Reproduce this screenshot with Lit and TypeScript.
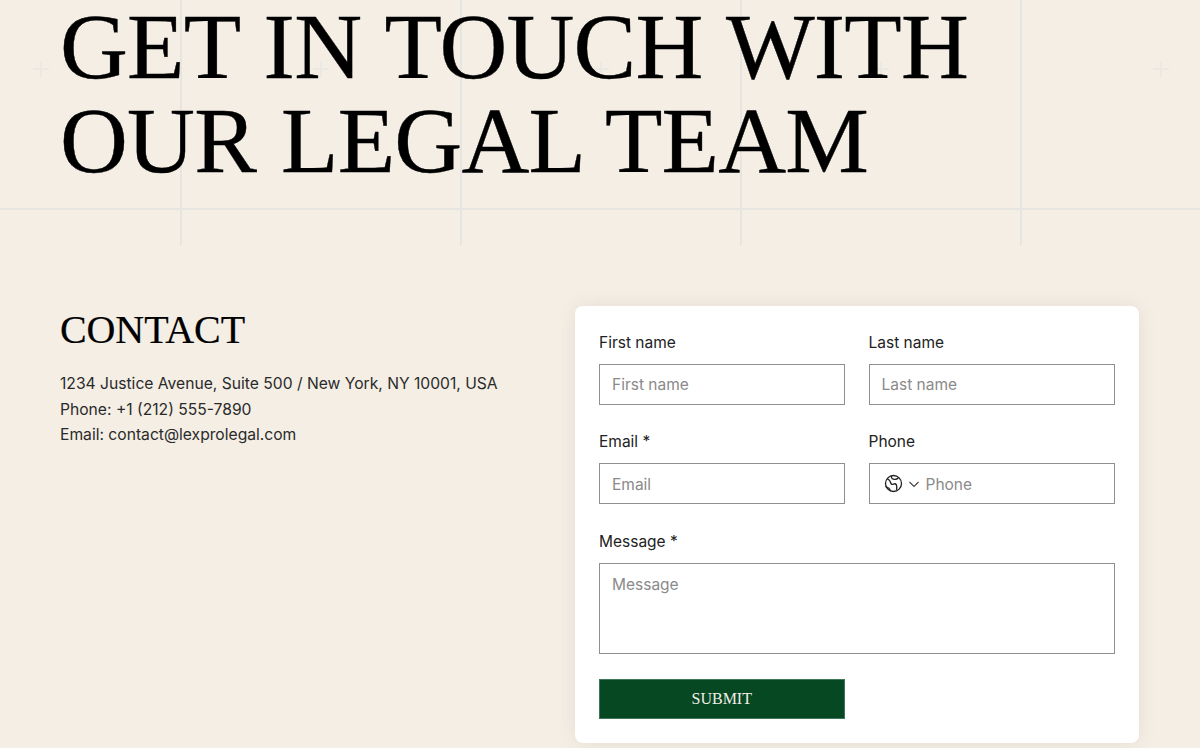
import { LitElement, html, css, svg } from "lit";
import { customElement } from "lit/decorators.js";

function svgLine(x: number) {
  return svg`<path d="M${x} 0V245" stroke="#e6e5e1" stroke-width="2" fill="none" />`;
}

function svgPlus(x: number) {
  return svg`<path d="M${x - 8} 69H${x + 8}M${x} 61V77" stroke="#e9e8e3" stroke-width="1.5" fill="none" />`;
}

@customElement("app-root")
export class AppRoot extends LitElement {
  static styles = css`
    :host {
      display: block;
      width: 1200px;
      height: 748px;
      overflow: hidden;
      background: #f4eee5;
      font-family: Inter, "Noto Sans", sans-serif;
      color: #222;
    }
    .hero {
      position: relative;
      display: flow-root;
      height: 245px;
      padding: 0 60px;
      box-sizing: border-box;
    }
    .grid {
      position: absolute;
      inset: 0;
      pointer-events: none;
    }
    h1 {
      position: relative;
      margin: -1.5px 0 0;
      font: 400 94px/94px "Liberation Serif", serif;
      letter-spacing: -0.8px;
      word-spacing: 2.3px;
      -webkit-text-stroke: 0.4px #000;
      color: #000;
    }
    .main {
      display: grid;
      grid-template-columns: 515px 564px;
      padding: 61px 0 0 60px;
    }
    h2 {
      margin: 0;
      font: 400 40px/48px "Liberation Serif", serif;
      letter-spacing: -0.1px;
      -webkit-text-stroke: 0.2px #000;
      color: #000;
    }
    .info {
      margin: 17px 0 0;
      font-size: 15.65px;
      line-height: 25.5px;
      color: #2a2a2a;
    }
    .card {
      box-sizing: border-box;
      height: 437px;
      background: #fff;
      border-radius: 8px;
      padding: 24.9px 24px 24px;
      box-shadow: 0 0 18px rgba(120, 90, 50, 0.1);
    }
    form {
      display: grid;
      grid-template-columns: 245.5px 246.5px;
      column-gap: 24px;
      row-gap: 25.5px;
      margin: 0;
    }
    .field {
      display: flex;
      flex-direction: column;
    }
    .wide {
      grid-column: 1 / 3;
    }
    label {
      font-size: 15.5px;
      line-height: 22px;
      padding-top: 1px;
      margin-bottom: 10px;
      color: #222;
    }
    input,
    textarea,
    .phone {
      box-sizing: border-box;
      width: 100%;
      height: 41px;
      border: 1px solid #8f8f8f;
      border-radius: 0;
      background: #fff;
      padding: 1px 12px 0;
      font: 400 15.5px/22px Inter, "Noto Sans", sans-serif;
      color: #222;
      outline: none;
      display: block;
    }
    textarea {
      height: 91.5px;
      padding: 10px 12px;
      resize: none;
    }
    input::placeholder,
    textarea::placeholder {
      color: #8a8a8a;
      opacity: 1;
    }
    .phone {
      display: flex;
      align-items: center;
      gap: 5px;
      padding: 0 0 0 14px;
    }
    .phone input {
      flex: 1;
      min-width: 0;
      height: 37px;
      border: 0;
      padding: 1px 0 0 1px;
    }
    .phone svg {
      flex: none;
      display: block;
    }
    button {
      box-sizing: border-box;
      width: 245.5px;
      height: 40px;
      margin-top: -0.5px;
      border: 1px solid #3f7558;
      background: #064822;
      color: #f2efe8;
      font: 400 16px/20px "Liberation Serif", serif;
      padding: 0;
      display: block;
    }
  `;

  render() {
    const xs = [181, 461, 741, 1021];
    const plus = [41, 321, 601, 881, 1161];
    return html`
      <section class="hero">
        <svg class="grid" width="1200" height="245" viewBox="0 0 1200 245" aria-hidden="true">
          <path d="M0 209H1200" stroke="#e6e5e1" stroke-width="2" fill="none" />
          ${xs.map((x) => svgLine(x))}
          ${plus.map((x) => svgPlus(x))}
        </svg>
        <h1>GET IN TOUCH WITH<br />OUR LEGAL TEAM</h1>
      </section>
      <section class="main">
        <div>
          <h2>CONTACT</h2>
          <p class="info">
            1234 Justice Avenue, Suite 500 / New York, NY 10001, USA<br />
            Phone: +1 (212) 555-7890<br />
            Email: contact@lexprolegal.com
          </p>
        </div>
        <div class="card">
          <form>
            <div class="field">
              <label>First name</label>
              <input placeholder="First name" />
            </div>
            <div class="field">
              <label>Last name</label>
              <input placeholder="Last name" />
            </div>
            <div class="field">
              <label>Email *</label>
              <input placeholder="Email" />
            </div>
            <div class="field">
              <label>Phone</label>
              <div class="phone">
                <svg width="19" height="19" viewBox="0 0 19 19" fill="none" stroke="#222" stroke-width="1.3">
                  <circle cx="9.5" cy="9.5" r="8" />
                  <path d="M3.2 4.6c2 .9 3.2 2.6 3.6 4.4.3 1.5 1.6 1.7 2.6 1.2 1.1-.6 2.4-.4 3 .7.5 1 .4 3 .1 5" />
                  <path d="M7.6 1.8c-.5 1.6.2 3 1.7 3.4 1.5.4 3.7.2 5.2-1.4" />
                  <path d="M6.6 17c-.9-1.4-1-3-2.8-3.4-.8-.2-1.6-.6-2.1-1.4" />
                </svg>
                <svg width="12" height="12" viewBox="0 0 12 12" fill="none" stroke="#444" stroke-width="1.1">
                  <path d="M1.5 4l4.5 4.5L10.5 4" />
                </svg>
                <input placeholder="Phone" />
              </div>
            </div>
            <div class="field wide">
              <label>Message *</label>
              <textarea placeholder="Message"></textarea>
            </div>
            <div>
              <button type="button">SUBMIT</button>
            </div>
          </form>
        </div>
      </section>
    `;
  }
}
